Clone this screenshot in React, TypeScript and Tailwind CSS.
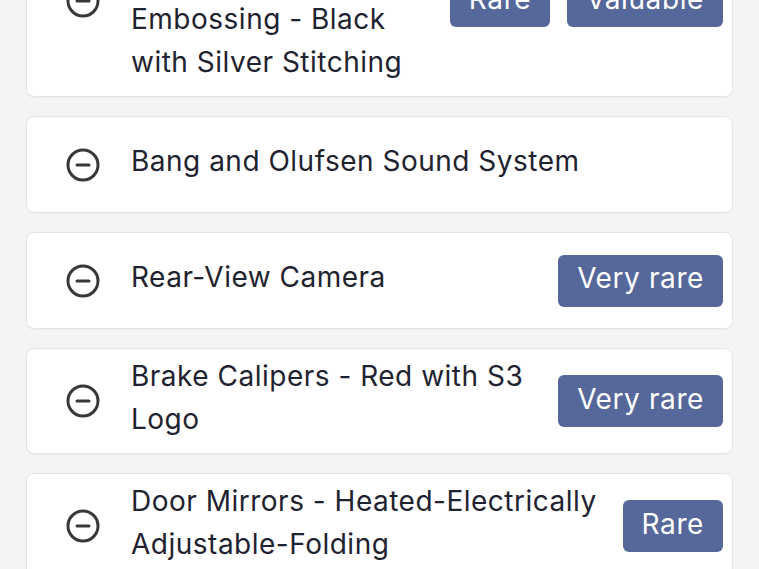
import React from 'react'
import { CircleMinus } from 'lucide-react'

type Option = {
  name: string
  tags: string[]
}

// names keep the wrapping the app shows
const options: Option[] = [
  {
    name: 'Sport Seats - Nappa\nLeather with S3\nEmbossing - Black\nwith Silver Stitching',
    tags: ['Rare', 'Valuable'],
  },
  { name: 'Bang and Olufsen Sound System', tags: [] },
  { name: 'Rear-View Camera', tags: ['Very rare'] },
  { name: 'Brake Calipers - Red with S3\nLogo', tags: ['Very rare'] },
  { name: 'Door Mirrors - Heated-Electrically\nAdjustable-Folding', tags: ['Rare'] },
]

const OptionRow = ({ option }: { option: Option }) => {
  return (
    <div className="flex min-h-[97px] items-center rounded-lg border border-[#e4e4e4] bg-white py-[9px] pl-[38px] pr-[9px] shadow-[0_1px_1px_rgba(0,0,0,0.03)]">
      <CircleMinus size={36} strokeWidth={2} className="mr-[30px] shrink-0 text-[#383838]" />
      <div className="relative -top-[3px] flex-1 whitespace-pre-line text-[28px] leading-[43px] tracking-[0.5px] text-[#1f2330]">
        {option.name}
      </div>
      {option.tags.length > 0 && (
        <div className="ml-[16px] flex shrink-0 gap-[17px]">
          {option.tags.map((tag) => (
            <span
              key={tag}
              className="flex h-[52px] items-center rounded-md bg-[#56689a] px-[19px] pb-[5px] text-[28px] tracking-[0.6px] text-white"
            >
              {tag}
            </span>
          ))}
        </div>
      )}
    </div>
  )
}

const App = () => {
  return (
    <div
      className="h-[569px] overflow-hidden bg-[#f4f4f4] px-[26px]"
      style={{ fontFamily: 'Inter, "Noto Sans", sans-serif' }}
    >
      <div className="-mt-[95px] flex flex-col gap-[19px]">
        {options.map((option) => (
          <OptionRow key={option.name} option={option} />
        ))}
      </div>
    </div>
  )
}

export default App
